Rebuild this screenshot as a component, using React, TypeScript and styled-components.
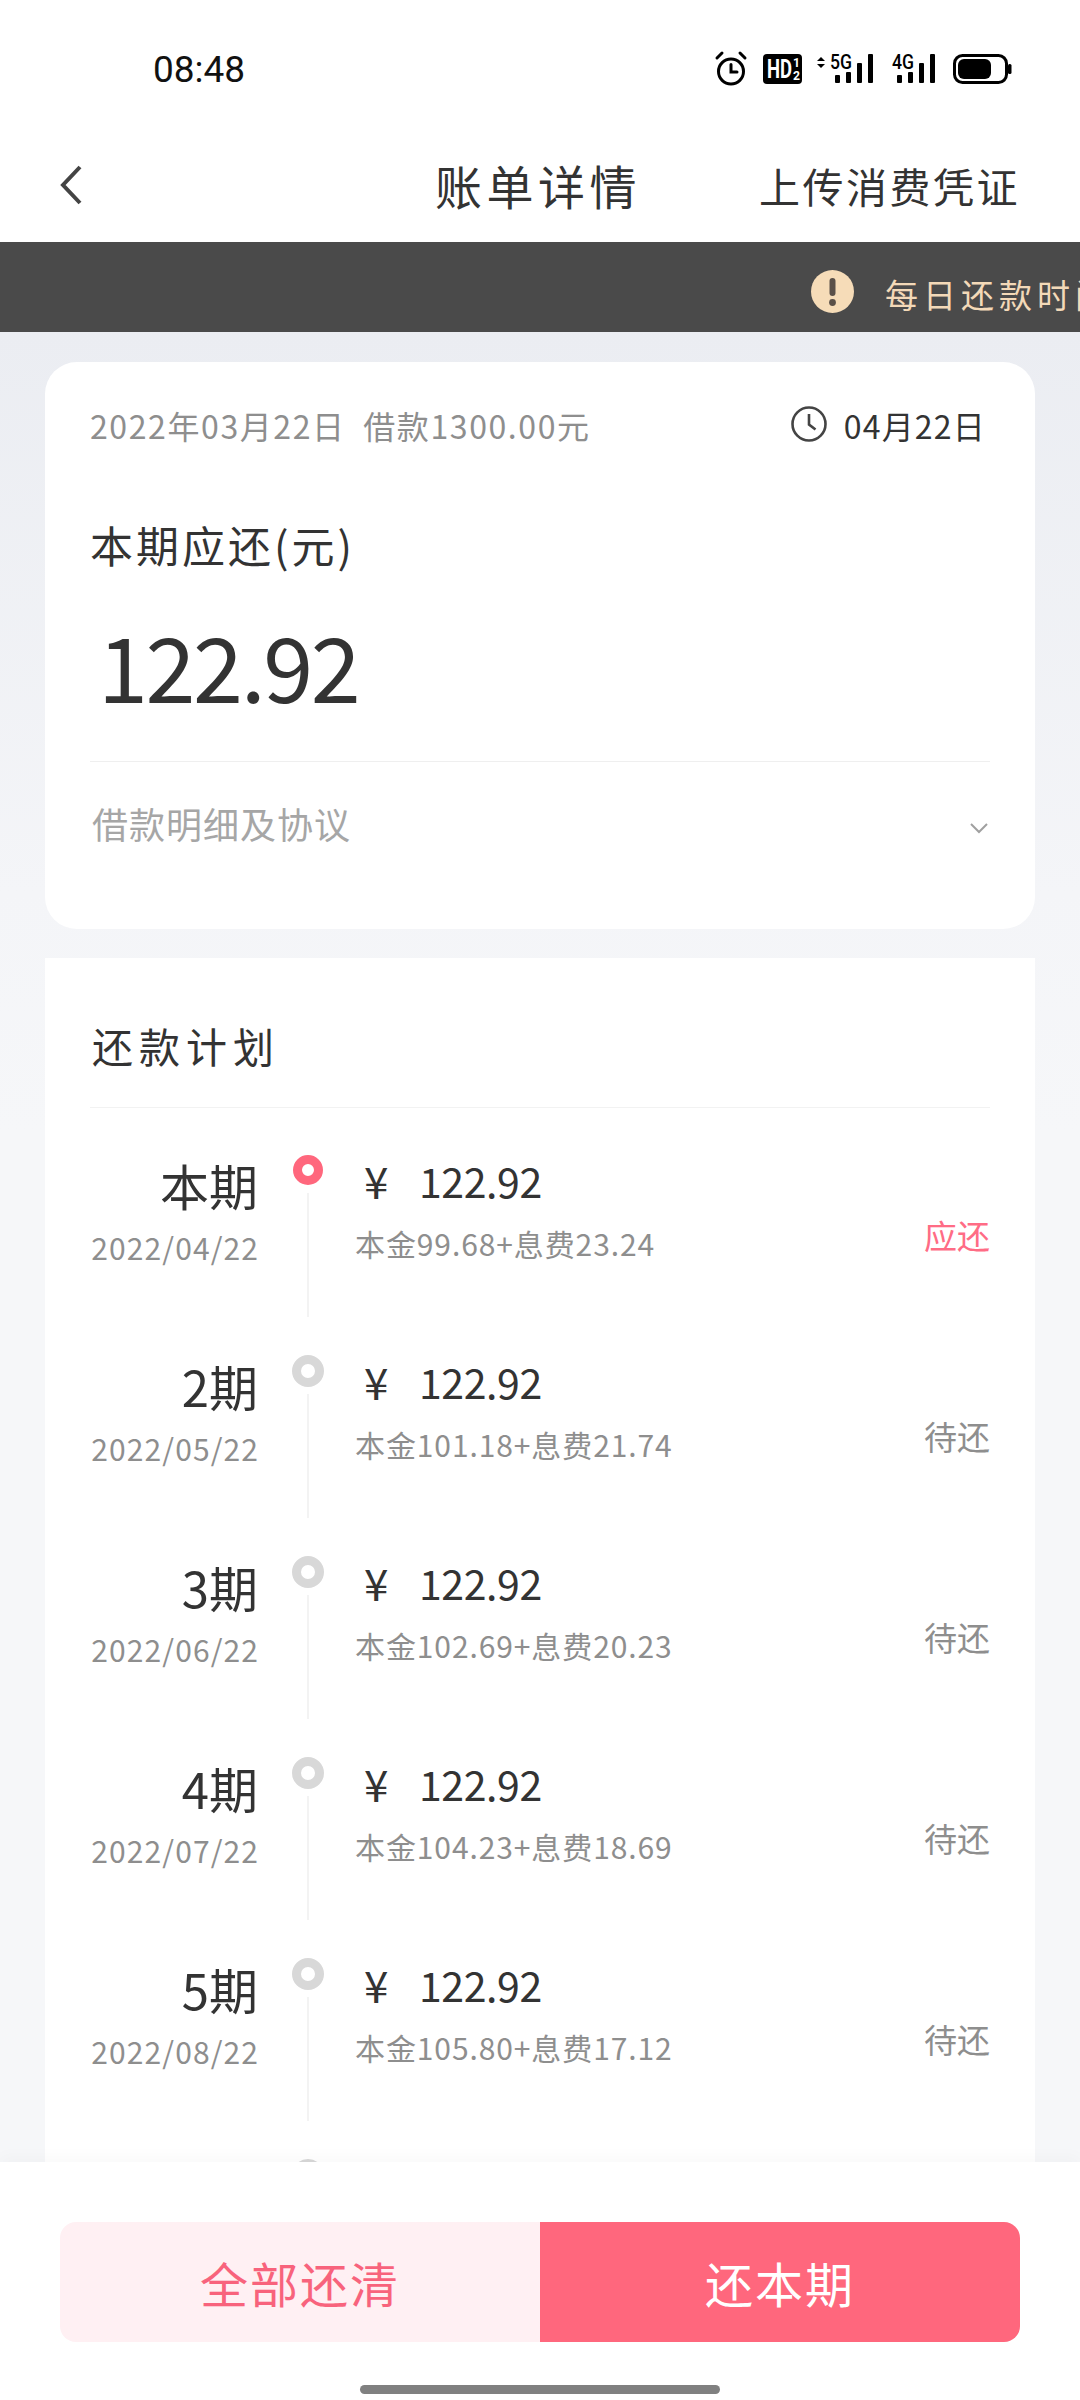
import React from 'react';
import styled, { createGlobalStyle } from 'styled-components';

const Global = createGlobalStyle`
  html, body { margin: 0; padding: 0; background: #fff; }
  * { box-sizing: border-box; }
`;

const CJK = `"Noto Sans CJK SC", "Noto Sans", sans-serif`;

const Page = styled.div`
  width: 1080px;
  height: 2400px;
  display: flex;
  flex-direction: column;
  overflow: hidden;
  background: #fff;
  font-family: ${CJK};
  font-weight: 400;
  color: #333;
`;

const StatusBar = styled.div`
  height: 100px;
  flex: none;
  display: flex;
  align-items: flex-start;
  justify-content: space-between;
  padding: 47px 66px 0 153px;
`;

const Clock = styled.div`
  font-family: Roboto, sans-serif;
  font-size: 37px;
  line-height: 46px;
  color: #111;
  font-weight: 400;
`;

const StatusIcons = styled.svg`
  display: block;
  width: 300px;
  height: 44px;
`;

const Nav = styled.div`
  height: 142px;
  flex: none;
  display: grid;
  grid-template-columns: 1fr auto 1fr;
  align-items: center;
  padding: 30px 62px 0 58px;
`;

const Back = styled.svg`
  display: block;
  width: 26px;
  height: 42px;
  margin-top: -2px;
`;

const Title = styled.div`
  font-size: 47px;
  line-height: 68px;
  letter-spacing: 4.5px;
  color: #333;
  margin-top: -2px;
`;

const NavAction = styled.div`
  justify-self: end;
  font-size: 41px;
  line-height: 60px;
  letter-spacing: 2.5px;
  margin-right: -2px;
  margin-top: -2px;
  white-space: nowrap;
`;

const Banner = styled.div`
  height: 90px;
  flex: none;
  background: #4a4a4a;
  display: flex;
  align-items: center;
  padding: 8px 0 0 811px;
  gap: 31px;
  overflow: hidden;
  white-space: nowrap;
`;

const BannerIcon = styled.svg`
  display: block;
  flex: none;
  width: 43px;
  height: 43px;
`;

const BannerText = styled.div`
  font-size: 33px;
  letter-spacing: 5px;
  color: #f3d9b8;
  line-height: 48px;
  flex: none;
  margin-top: 6px;
`;

const Main = styled.div`
  flex: 1;
  min-height: 0;
  overflow: hidden;
  padding: 30px 45px 0;
  display: flex;
  flex-direction: column;
  gap: 29px;
  background: linear-gradient(#ebedf2 0, #f4f5f8 560px, #f6f7f9 800px);
`;

const SummaryCard = styled.section`
  flex: none;
  height: 567px;
  background: #fff;
  border-radius: 32px;
  padding: 0 45px;
`;

const MetaRow = styled.div`
  height: 60px;
  margin-top: 33px;
  display: flex;
  align-items: center;
  justify-content: space-between;
`;

const MetaLeft = styled.div`
  font-size: 32px;
  line-height: 48px;
  letter-spacing: 1.6px;
  color: #8e8e8e;
  white-space: pre;
`;

const MetaRight = styled.div`
  display: flex;
  align-items: center;
  gap: 16px;
  font-size: 32px;
  line-height: 48px;
  letter-spacing: 1.2px;
  color: #333;
  margin-right: 4px;
`;

const ClockIcon = styled.svg`
  display: block;
  width: 38px;
  height: 38px;
  margin-top: -2px;
`;

const DueLabel = styled.div`
  margin-top: 58px;
  font-size: 43px;
  line-height: 62px;
  letter-spacing: 3px;
  color: #333;
`;

const DueAmount = styled.div`
  margin-top: 39px;
  padding-left: 8px;
  font-size: 90px;
  line-height: 100px;
  letter-spacing: -2.4px;
  color: #333;
`;

const Divider = styled.div`
  height: 1px;
  background: #efefef;
  margin-top: 47px;
`;

const DetailRow = styled.div`
  height: 122px;
  display: flex;
  align-items: center;
  justify-content: space-between;
  padding: 0 1px 0 2px;
`;

const DetailLabel = styled.div`
  font-size: 36px;
  line-height: 52px;
  letter-spacing: 1px;
  color: #a6a6a6;
`;

const Chevron = styled.svg`
  display: block;
  width: 20px;
  height: 14px;
  margin-top: 10px;
`;

const PlanCard = styled.section`
  flex: none;
  background: #fff;
  padding: 0 45px;
`;

const PlanHeader = styled.div`
  height: 150px;
  padding: 57px 0 0 2px;
  font-size: 41px;
  line-height: 60px;
  letter-spacing: 6px;
  color: #333;
  border-bottom: 1px solid #f2f2f2;
`;

const List = styled.div`
  padding-top: 44px;
`;

const Row = styled.div`
  height: 201px;
  display: flex;
`;

const DateCol = styled.div`
  flex: none;
  width: 168px;
  display: flex;
  flex-direction: column;
  align-items: flex-end;
`;

const Period = styled.div`
  font-size: 49px;
  line-height: 66px;
  color: #333;
`;

const DateText = styled.div`
  margin-top: 7px;
  font-size: 30px;
  line-height: 44px;
  letter-spacing: 1.1px;
  margin-right: -1px;
  color: #8e8e8e;
  white-space: nowrap;
`;

const Axis = styled.div`
  flex: none;
  width: 100px;
  display: flex;
  flex-direction: column;
  align-items: center;
`;

const Dot = styled.div<{ $active?: boolean }>`
  flex: none;
  width: ${p => (p.$active ? 30 : 32)}px;
  height: ${p => (p.$active ? 30 : 32)}px;
  margin: ${p => (p.$active ? '3px 0 1px' : '2px 0 0')};
  border-radius: 50%;
  background: #fff;
  border: 9px solid ${p => (p.$active ? '#ff677d' : '#d8d8d8')};
`;

const AxisLine = styled.div`
  flex: none;
  width: 2px;
  height: 124px;
  margin-top: 7px;
  background: #f3f3f3;
`;

const Body = styled.div`
  flex: 1;
  margin-left: -3px;
`;

const Amount = styled.div`
  display: flex;
  align-items: center;
  font-size: 41px;
  line-height: 56px;
  letter-spacing: -0.4px;
  color: #333;
  padding-left: 9px;
`;

const Currency = styled.span`
  width: 55px;
  font-size: 44px;
  letter-spacing: 0;
`;

const Breakdown = styled.div`
  margin-top: 13px;
  font-size: 30px;
  line-height: 44px;
  letter-spacing: 0.9px;
  color: #8e8e8e;
`;

const State = styled.div<{ $due?: boolean }>`
  flex: none;
  padding-top: 59px;
  font-size: 33px;
  line-height: 48px;
  color: ${p => (p.$due ? '#ff6c85' : '#8e8e8e')};
`;

const Footer = styled.div`
  flex: none;
  height: 238px;
  background: #fff;
  padding: 60px 60px 0;
  display: flex;
  flex-direction: column;
  position: relative;
  box-shadow: 0 -6px 14px rgba(0, 0, 0, 0.025);
`;

const Buttons = styled.div`
  height: 120px;
  display: grid;
  grid-template-columns: 1fr 1fr;
  border-radius: 16px;
  overflow: hidden;
`;

const Button = styled.div<{ $primary?: boolean }>`
  display: flex;
  align-items: center;
  justify-content: center;
  font-size: 48px;
  letter-spacing: 2px;
  color: ${p => (p.$primary ? '#fff' : '#f8637c')};
  background: ${p => (p.$primary ? '#ff677d' : '#fff0f3')};
`;

const HomeBar = styled.div`
  width: 360px;
  height: 9px;
  margin: 43px auto 0;
  border-radius: 5px;
  background: #808080;
`;

const rows = [
  { p: '本期', d: '2022/04/22', b: '本金99.68+息费23.24', s: '应还', active: true },
  { p: '2期', d: '2022/05/22', b: '本金101.18+息费21.74', s: '待还' },
  { p: '3期', d: '2022/06/22', b: '本金102.69+息费20.23', s: '待还' },
  { p: '4期', d: '2022/07/22', b: '本金104.23+息费18.69', s: '待还' },
  { p: '5期', d: '2022/08/22', b: '本金105.80+息费17.12', s: '待还' },
];

function StatusGlyphs() {
  return (
    <StatusIcons viewBox="0 0 300 44">
      <g fill="none" stroke="#000" strokeWidth="3" strokeLinecap="round">
        <circle cx="17" cy="24.5" r="12.5" />
        <path d="M17 17.5v7.5h6" />
        <path d="M3 11l5-5M31 11l-5-5" />
      </g>
      <rect x="49" y="7" width="39" height="30" rx="4" fill="#000" />
      <text x="53" y="31" fontFamily="Roboto, sans-serif" fontWeight="700" fontSize="25" fill="#fff" textLength="25" lengthAdjust="spacingAndGlyphs">HD</text>
      <text x="79" y="20" fontFamily="Roboto, sans-serif" fontWeight="700" fontSize="13" fill="#fff" textLength="7" lengthAdjust="spacingAndGlyphs">1</text>
      <text x="79" y="33" fontFamily="Roboto, sans-serif" fontWeight="700" fontSize="13" fill="#fff" textLength="7" lengthAdjust="spacingAndGlyphs">2</text>
      <path d="M103 14l4-4 4 4zM103 17l4 4 4-4z" fill="#000" />
      <text x="116" y="22" fontFamily="Roboto, sans-serif" fontWeight="500" fontSize="20" fill="#000" textLength="22" lengthAdjust="spacingAndGlyphs">5G</text>
      <g fill="#000">
        <rect x="121" y="28" width="5" height="8" rx="1" />
        <rect x="132" y="25" width="5" height="11" rx="1" />
        <rect x="143" y="16" width="5" height="20" rx="1" />
        <rect x="154" y="7" width="5" height="29" rx="1" />
        <rect x="183" y="28" width="5" height="8" rx="1" />
        <rect x="194" y="25" width="5" height="11" rx="1" />
        <rect x="205" y="16" width="5" height="20" rx="1" />
        <rect x="216" y="7" width="5" height="29" rx="1" />
      </g>
      <text x="178" y="22" fontFamily="Roboto, sans-serif" fontWeight="500" fontSize="20" fill="#000" textLength="22" lengthAdjust="spacingAndGlyphs">4G</text>
      <rect x="240.5" y="8.5" width="52" height="27" rx="8" fill="none" stroke="#000" strokeWidth="3" />
      <rect x="244" y="12" width="33" height="20" rx="6" fill="#000" />
      <rect x="294" y="17" width="3.5" height="10" rx="1.5" fill="#000" />
    </StatusIcons>
  );
}

export default function App() {
  return (
    <Page>
      <Global />
      <StatusBar>
        <Clock>08:48</Clock>
        <StatusGlyphs />
      </StatusBar>
      <Nav>
        <Back viewBox="0 0 26 42">
          <path d="M22 3L5 21l17 18" fill="none" stroke="#444" strokeWidth="4" />
        </Back>
        <Title>账单详情</Title>
        <NavAction>上传消费凭证</NavAction>
      </Nav>
      <Banner>
        <BannerIcon viewBox="0 0 43 43">
          <circle cx="21.5" cy="21.5" r="21.5" fill="#f6dcb8" />
          <rect x="18.5" y="8" width="6" height="18" rx="3" fill="#5a5048" />
          <circle cx="21.5" cy="32.5" r="3.4" fill="#5a5048" />
        </BannerIcon>
        <BannerText>每日还款时间</BannerText>
      </Banner>
      <Main>
        <SummaryCard>
          <MetaRow>
            <MetaLeft>2022年03月22日  借款1300.00元</MetaLeft>
            <MetaRight>
              <ClockIcon viewBox="0 0 38 38">
                <circle cx="19" cy="19" r="16.5" fill="none" stroke="#444" strokeWidth="2.6" />
                <path d="M19 9v10.5l6.5 5" fill="none" stroke="#444" strokeWidth="2.6" />
              </ClockIcon>
              04月22日
            </MetaRight>
          </MetaRow>
          <DueLabel>本期应还(元)</DueLabel>
          <DueAmount>122.92</DueAmount>
          <Divider />
          <DetailRow>
            <DetailLabel>借款明细及协议</DetailLabel>
            <Chevron viewBox="0 0 20 14">
              <path d="M2 3l8 8 8-8" fill="none" stroke="#a0a0a0" strokeWidth="2" />
            </Chevron>
          </DetailRow>
        </SummaryCard>
        <PlanCard>
          <PlanHeader>还款计划</PlanHeader>
          <List>
            {rows.map(r => (
              <Row key={r.p}>
                <DateCol>
                  <Period>{r.p}</Period>
                  <DateText>{r.d}</DateText>
                </DateCol>
                <Axis>
                  <Dot $active={r.active} />
                  <AxisLine />
                </Axis>
                <Body>
                  <Amount>
                    <Currency>¥</Currency>
                    122.92
                  </Amount>
                  <Breakdown>{r.b}</Breakdown>
                </Body>
                <State $due={r.active}>{r.s}</State>
              </Row>
            ))}
            <Row>
              <DateCol />
              <Axis>
                <Dot />
              </Axis>
            </Row>
          </List>
        </PlanCard>
      </Main>
      <Footer>
        <Buttons>
          <Button>全部还清</Button>
          <Button $primary>还本期</Button>
        </Buttons>
        <HomeBar />
      </Footer>
    </Page>
  );
}
